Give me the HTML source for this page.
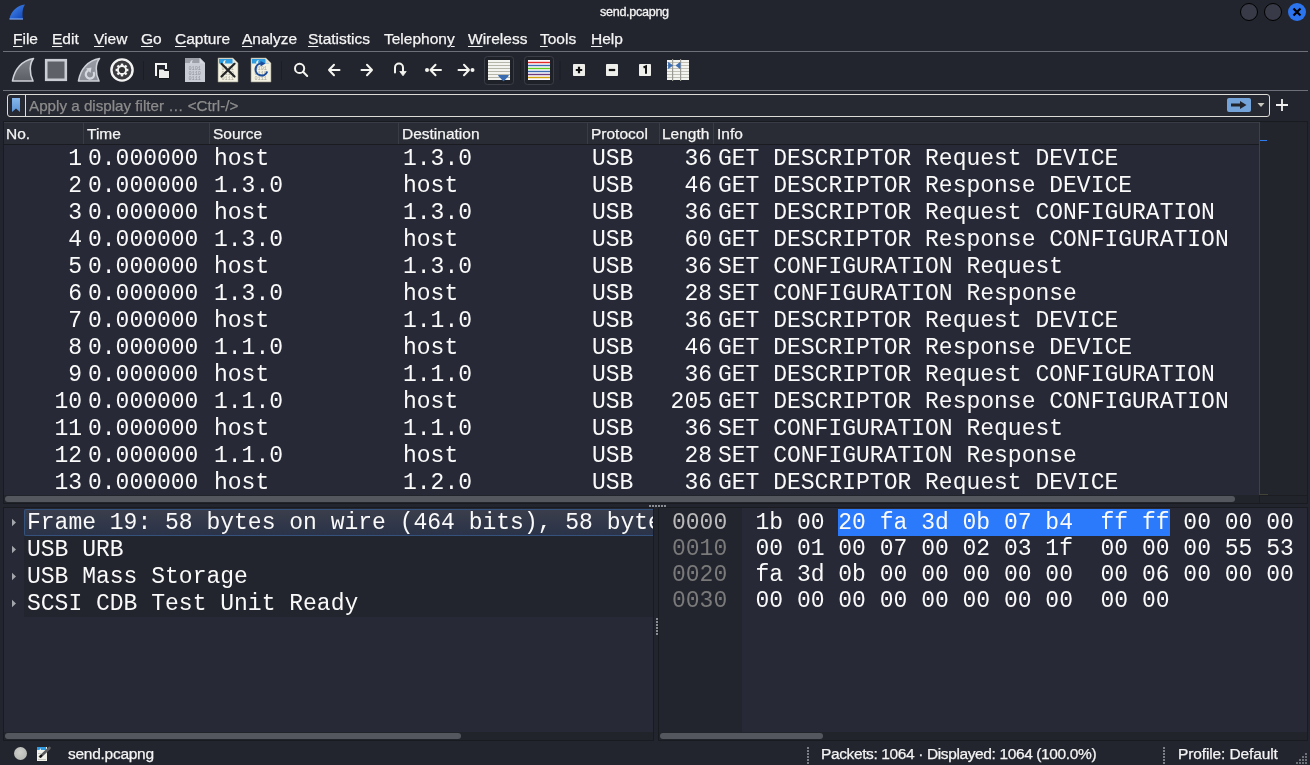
<!DOCTYPE html>
<html><head><meta charset="utf-8">
<style>
*{box-sizing:border-box}
html,body{margin:0;padding:0}
body{width:1310px;height:765px;overflow:hidden;background:#23252e;position:relative;font-family:"Liberation Sans",sans-serif;color:#f4f4f4}
.a{position:absolute;white-space:pre}
.s{font-size:15.5px;line-height:17px;-webkit-text-stroke:0.25px currentColor}
.m{font-family:"Liberation Mono",monospace;font-size:23px;line-height:27px;color:#fafafa}
.u{text-decoration:underline;text-decoration-thickness:1px;text-underline-offset:2px}
.hl{position:absolute;height:1px;background:#6e7079}
#root{position:absolute;left:0;top:0;width:1310px;height:765px;will-change:transform}
</style></head><body><div id="root">
<svg class="a" style="left:8px;top:3px" width="19" height="18" viewBox="0 0 19 18">
<defs><linearGradient id="fin" x1="0" y1="0" x2="1" y2="1"><stop offset="0" stop-color="#4d8ff0"/><stop offset="1" stop-color="#0a3fb5"/></linearGradient></defs>
<path d="M1.5 16 C3 8 9 2.5 17 1.5 C14.5 5 14 11 15 16 Z" fill="url(#fin)"/>
<path d="M1.5 16 L15 16" stroke="#7aa7f0" stroke-width="1.2"/>
</svg>
<div class="a" style="left:600px;top:3.5px;font-size:12.6px;line-height:16px;letter-spacing:-0.3px;-webkit-text-stroke:0.3px #f4f4f4;color:#f4f4f4">send.pcapng</div>
<div class="a" style="left:1240px;top:3px;width:18px;height:18px;border-radius:50%;background:#383b47;border:1px solid #000"></div>
<div class="a" style="left:1264px;top:3px;width:18px;height:18px;border-radius:50%;background:#383b47;border:1px solid #000"></div>
<div class="a" style="left:1288px;top:3px;width:18px;height:18px;border-radius:50%;background:#2b74ee"></div>
<svg class="a" style="left:1288px;top:3px" width="18" height="18"><path d="M5.5 5.5 L12.5 12.5 M12.5 5.5 L5.5 12.5" stroke="#000" stroke-width="2.2"/></svg>
<div class="a s" style="left:13px;top:30px"><span class="u">F</span>ile</div>
<div class="a s" style="left:52px;top:30px"><span class="u">E</span>dit</div>
<div class="a s" style="left:94px;top:30px"><span class="u">V</span>iew</div>
<div class="a s" style="left:141px;top:30px"><span class="u">G</span>o</div>
<div class="a s" style="left:175px;top:30px"><span class="u">C</span>apture</div>
<div class="a s" style="left:242px;top:30px"><span class="u">A</span>nalyze</div>
<div class="a s" style="left:308px;top:30px"><span class="u">S</span>tatistics</div>
<div class="a s" style="left:384px;top:30px">Telephon<span class="u">y</span></div>
<div class="a s" style="left:468px;top:30px"><span class="u">W</span>ireless</div>
<div class="a s" style="left:540px;top:30px"><span class="u">T</span>ools</div>
<div class="a s" style="left:591px;top:30px"><span class="u">H</span>elp</div>
<div class="hl" style="left:3px;top:51px;width:1305px"></div>
<svg class="a" style="left:0;top:0" width="700" height="90" viewBox="0 0 700 90">
<defs>
<linearGradient id="g1" x1="0" y1="0" x2="0" y2="1"><stop offset="0" stop-color="#82848c"/><stop offset="1" stop-color="#5c5e66"/></linearGradient>
<linearGradient id="g2" x1="0" y1="0" x2="0" y2="1"><stop offset="0" stop-color="#989aa4"/><stop offset="1" stop-color="#8a8c96"/></linearGradient>
</defs>
<!-- start fin -->
<path d="M12.5 81 C14.5 69 22 60.5 33.5 58.5 C29.5 63.5 29 73 33 81 Z" fill="url(#g1)" stroke="#cfd1d9" stroke-width="1.6" stroke-linejoin="round"/>
<!-- stop -->
<rect x="46.2" y="60.2" width="19.6" height="19.6" fill="#5f6169" stroke="#cbcdd5" stroke-width="2.6"/>
<!-- restart fin -->
<path d="M78.5 81 C80.5 69 88 60.5 99.5 58.5 C95.5 63.5 95 73 99 81 Z" fill="url(#g2)" stroke="#cfd1d9" stroke-width="1.6" stroke-linejoin="round"/>
<path d="M88.3 70.5 A4.2 4.2 0 1 0 93.5 72" fill="none" stroke="#d6d8e0" stroke-width="2.2"/>
<path d="M86 68.5 L91.5 67.5 L90.5 73 Z" fill="#d6d8e0"/>
<!-- gear -->
<circle cx="122" cy="70" r="10.6" fill="#3a3a3e" stroke="#f4f4f4" stroke-width="2.4"/>
<g fill="#f4f4f4" transform="translate(122 70)">
<circle r="5"/>
<rect x="-1.2" y="-6.4" width="2.4" height="12.8"/>
<rect x="-1.2" y="-6.4" width="2.4" height="12.8" transform="rotate(45)"/>
<rect x="-1.2" y="-6.4" width="2.4" height="12.8" transform="rotate(90)"/>
<rect x="-1.2" y="-6.4" width="2.4" height="12.8" transform="rotate(135)"/>
</g>
<circle cx="122" cy="70" r="3.1" fill="#333336"/>
<!-- sep -->
<rect x="143" y="61" width="1" height="19" fill="#1b1d24"/>
<!-- open -->
<path d="M156 76 V64 H166 V69" fill="none" stroke="#f4f4f4" stroke-width="2"/>
<path d="M158.5 78.5 V69 H163.5 L164.5 70.5 H169.5 V78.5 Z" fill="#ececea" stroke="#15161a" stroke-width="1"/>
<!-- save doc grey -->
<path d="M185 58 H200 L205 63 V82 H185 Z" fill="#c9cbd5"/>
<path d="M185 58 H200 L205 63 H185 Z" fill="#9c9ea8"/>
<path d="M199.5 58 L205 63.5 H199.5 Z" fill="#d8dae2"/>
<path d="M190 63.5 C190 61 191.5 60 193 60 C192 61 192 62 192.3 63.5 Z" fill="#d6d8e0"/>
<g fill="#8f919b" font-family="Liberation Mono" font-size="5.2"><text x="188.5" y="70">0101</text><text x="188.5" y="75">0110</text><text x="188.5" y="80">0111</text></g>
<!-- close doc -->
<path d="M218 58 H233 L238 63 V82 H218 Z" fill="#f3f1e2" stroke="#8c8a7c" stroke-width="0.6"/>
<path d="M219 59 H232.5 L236 63.5 H219 Z" fill="#2f9de0"/>
<path d="M232.5 58.5 L237.5 63.5 H232.5 Z" fill="#e4e2d4"/>
<path d="M223 63.5 C223 61 224.5 60 226 60 C225 61 225 62 225.3 63.5 Z" fill="#f3f1e2"/>
<g fill="#a8a698" font-family="Liberation Mono" font-size="5.2"><text x="221.5" y="70">0101</text><text x="221.5" y="75">0110</text><text x="221.5" y="80">0111</text></g>
<path d="M221.5 63.8 L234.5 76.5 M234.5 63.8 L221.5 76.5" stroke="#222426" stroke-width="2.2" stroke-linecap="round"/>
<!-- reload doc -->
<path d="M251 58 H266 L271 63 V82 H251 Z" fill="#f3f1e2" stroke="#8c8a7c" stroke-width="0.6"/>
<path d="M252 59 H265.5 L269 63.5 H252 Z" fill="#2f9de0"/>
<path d="M265.5 58.5 L270.5 63.5 H265.5 Z" fill="#e4e2d4"/>
<path d="M256 63.5 C256 61 257.5 60 259 60 C258 61 258 62 258.3 63.5 Z" fill="#f3f1e2"/>
<g fill="#a8a698" font-family="Liberation Mono" font-size="5.2"><text x="254.5" y="70">0101</text><text x="254.5" y="75">0110</text><text x="254.5" y="80">0111</text></g>
<path d="M261.5 63.5 A6 6 0 1 0 267.2 71.5" fill="none" stroke="#1c4d9c" stroke-width="2.1"/>
<path d="M260.5 61 L265.5 63.5 L260.5 66.5 Z" fill="#1c4d9c"/>
<!-- sep -->
<rect x="281" y="61" width="1" height="19" fill="#1b1d24"/>
<!-- search -->
<circle cx="299.6" cy="68.4" r="4.6" fill="none" stroke="#f4f4f0" stroke-width="2"/>
<path d="M303 71.8 L307.2 76" stroke="#f4f4f0" stroke-width="2" stroke-linecap="round"/>
<!-- arrows -->
<g stroke="#f4f4f0" stroke-width="2" fill="none" stroke-linecap="round" stroke-linejoin="round">
<path d="M329 70 H339.5 M334 64.8 L329 70 L334 75.2"/>
<path d="M361.5 70 H372 M367 64.8 L372 70 L367 75.2"/>
<path d="M395 72.5 V67.5 A4 4 0 0 1 403 67.5 V72"/>
<path d="M430.5 70 H441 M435.5 64.8 L430.5 70 L435.5 75.2"/>
<path d="M458.5 70 H469 M464 64.8 L469 70 L464 75.2"/>
</g>
<path d="M399.8 71.5 H406.2 L403 75.8 Z" fill="#f4f4f0" stroke="#f4f4f0" stroke-width="0.8" stroke-linejoin="round"/>
<circle cx="427" cy="70" r="2" fill="#f4f4f0"/>
<circle cx="472.5" cy="70" r="2" fill="#f4f4f0"/>
<!-- autoscroll -->
<rect x="484.5" y="56.5" width="29" height="28" rx="3" fill="#1f2128" stroke="#3b3e47" stroke-width="1"/>
<rect x="488" y="60" width="22" height="20" fill="#f3f3ef"/>
<g fill="#b5b5aa"><rect x="488" y="62" width="22" height="1"/><rect x="488" y="65" width="22" height="1"/><rect x="488" y="68" width="22" height="1"/><rect x="488" y="71" width="22" height="1"/><rect x="488" y="74" width="22" height="1"/><rect x="488" y="77" width="22" height="1"/></g>
<path d="M498.8 75.5 H508.2 L503.5 80.5 Z" fill="#3a6cb2" stroke="#3a6cb2" stroke-width="1.2" stroke-linejoin="round"/>
<rect x="520" y="61" width="1" height="19" fill="#1b1d24"/>
<!-- colorize -->
<rect x="524.5" y="56.5" width="29" height="28" rx="3" fill="#1f2128" stroke="#3b3e47" stroke-width="1"/>
<rect x="528" y="60" width="22" height="20" fill="#fbf8fb"/>
<rect x="528" y="61.8" width="22" height="1.4" fill="#e52a2a"/>
<rect x="528" y="64.8" width="22" height="1.4" fill="#3b6db3"/>
<rect x="528" y="67.8" width="22" height="1.4" fill="#5fcb1e"/>
<rect x="528" y="70.8" width="22" height="1.4" fill="#3b6db3"/>
<rect x="528" y="73.8" width="22" height="1.4" fill="#6e3b7c"/>
<rect x="528" y="76.8" width="22" height="1.4" fill="#d0a10a"/>
<rect x="559.5" y="61" width="1" height="19" fill="#1b1d24"/>
<!-- zoom -->
<rect x="573" y="64" width="12" height="12" rx="0.8" fill="#eeeeea"/>
<path d="M579 66.8 V73.2 M575.8 70 H582.2" stroke="#111" stroke-width="2.2"/>
<rect x="606" y="64" width="12" height="12" rx="0.8" fill="#eeeeea"/>
<path d="M608.8 70 H615.2" stroke="#111" stroke-width="2.2"/>
<rect x="639" y="64" width="12" height="12" rx="0.8" fill="#eeeeea"/>
<path d="M643.5 67.5 L646 66.3 V73.8" stroke="#111" stroke-width="2" fill="none"/>
<!-- resize cols -->
<rect x="667" y="60" width="22" height="20" fill="#f3f3ef"/>
<g fill="#c0c0b6"><rect x="667" y="62" width="22" height="1"/><rect x="667" y="65" width="22" height="1"/><rect x="667" y="68" width="22" height="1"/><rect x="667" y="71" width="22" height="1"/><rect x="667" y="74" width="22" height="1"/><rect x="667" y="77" width="22" height="1"/></g>
<rect x="672" y="59" width="1.2" height="22" fill="#9a9a94"/>
<rect x="680" y="59" width="1.2" height="22" fill="#9a9a94"/>
<path d="M668.5 62.5 L672.5 65.5 L668.5 68.5 Z" fill="#3a6cb2" stroke="#3a6cb2" stroke-width="0.8" stroke-linejoin="round"/>
<path d="M680 62.5 L676 65.5 L680 68.5 Z" fill="#3a6cb2" stroke="#3a6cb2" stroke-width="0.8" stroke-linejoin="round"/>
</svg>
<div class="hl" style="left:3px;top:90px;width:1305px"></div>
<div class="a" style="left:7px;top:94px;width:1263px;height:23px;border:1.5px solid #dedcd6;border-radius:3px;background:#262832"></div>
<div class="a" style="left:25px;top:95px;width:1px;height:21px;background:#dedcd6"></div>
<svg class="a" style="left:11px;top:97px" width="10" height="16"><defs><linearGradient id="bm" x1="0" y1="0" x2="0" y2="1"><stop offset="0" stop-color="#86b8ec"/><stop offset="1" stop-color="#5b93d6"/></linearGradient></defs><path d="M1 1 H9 V15 L5 11.5 L1 15 Z" fill="url(#bm)"/></svg>
<div class="a s" style="left:29px;top:97px;color:#8c8c8c;font-size:15.2px">Apply a display filter … &lt;Ctrl-/&gt;</div>
<div class="a" style="left:1227px;top:98px;width:24px;height:14px;border-radius:2px;background:#73a3d8"></div>
<svg class="a" style="left:1227px;top:98px" width="24" height="14"><path d="M4 5.5 H13 V3 L19.5 7 L13 11 V8.5 H4 Z" fill="#23252d"/></svg>
<svg class="a" style="left:1256px;top:101px" width="10" height="8"><path d="M1.5 2 H8.5 L5 6 Z" fill="#c8c8c0"/></svg>
<svg class="a" style="left:1274px;top:97px" width="16" height="16"><path d="M8 2 V14 M2 8 H14" stroke="#f0f0f0" stroke-width="1.8"/></svg>
<div class="a" style="left:3px;top:121px;width:1305px;height:383px;background:#272a36;border:1px solid #1a1b21"></div>
<div class="a" style="left:4px;top:122px;width:1255px;height:23px;background:#2a2c35;border-top:1px solid #3a3c45;border-bottom:1px solid #1a1b21"></div>
<div class="a" style="left:83px;top:123px;width:1px;height:21px;background:#3a3c45"></div>
<div class="a" style="left:209px;top:123px;width:1px;height:21px;background:#3a3c45"></div>
<div class="a" style="left:398px;top:123px;width:1px;height:21px;background:#3a3c45"></div>
<div class="a" style="left:587px;top:123px;width:1px;height:21px;background:#3a3c45"></div>
<div class="a" style="left:659px;top:123px;width:1px;height:21px;background:#3a3c45"></div>
<div class="a" style="left:713px;top:123px;width:1px;height:21px;background:#3a3c45"></div>
<div class="a" style="left:1259px;top:122px;width:48px;height:373px;background:#23252d"></div>
<div class="a" style="left:1259px;top:122px;width:1px;height:373px;background:#434238"></div>
<div class="a" style="left:1259px;top:494px;width:9px;height:1px;background:#434238"></div>
<div class="a" style="left:1260px;top:140px;width:7px;height:1px;background:#2f7cf0"></div>
<div class="a" style="left:4px;top:495px;width:1303px;height:8px;background:#22242b"></div>
<div class="a" style="left:1259px;top:495px;width:1px;height:8px;background:#1c1d23"></div>
<div class="a" style="left:1260px;top:495px;width:47px;height:1px;background:#1c1d23"></div>
<div class="a s" style="left:6px;top:125px">No.</div>
<div class="a s" style="left:87px;top:125px">Time</div>
<div class="a s" style="left:213px;top:125px">Source</div>
<div class="a s" style="left:402px;top:125px">Destination</div>
<div class="a s" style="left:591px;top:125px">Protocol</div>
<div class="a s" style="left:662px;top:125px">Length</div>
<div class="a s" style="left:717px;top:125px">Info</div>
<div class="a m" style="left:0;top:146px;width:82px;text-align:right">1</div>
<div class="a m" style="left:88px;top:146px">0.000000</div>
<div class="a m" style="left:214px;top:146px">host</div>
<div class="a m" style="left:403px;top:146px">1.3.0</div>
<div class="a m" style="left:592px;top:146px">USB</div>
<div class="a m" style="left:600px;top:146px;width:112px;text-align:right">36</div>
<div class="a m" style="left:718px;top:146px">GET DESCRIPTOR Request DEVICE</div>
<div class="a m" style="left:0;top:173px;width:82px;text-align:right">2</div>
<div class="a m" style="left:88px;top:173px">0.000000</div>
<div class="a m" style="left:214px;top:173px">1.3.0</div>
<div class="a m" style="left:403px;top:173px">host</div>
<div class="a m" style="left:592px;top:173px">USB</div>
<div class="a m" style="left:600px;top:173px;width:112px;text-align:right">46</div>
<div class="a m" style="left:718px;top:173px">GET DESCRIPTOR Response DEVICE</div>
<div class="a m" style="left:0;top:200px;width:82px;text-align:right">3</div>
<div class="a m" style="left:88px;top:200px">0.000000</div>
<div class="a m" style="left:214px;top:200px">host</div>
<div class="a m" style="left:403px;top:200px">1.3.0</div>
<div class="a m" style="left:592px;top:200px">USB</div>
<div class="a m" style="left:600px;top:200px;width:112px;text-align:right">36</div>
<div class="a m" style="left:718px;top:200px">GET DESCRIPTOR Request CONFIGURATION</div>
<div class="a m" style="left:0;top:227px;width:82px;text-align:right">4</div>
<div class="a m" style="left:88px;top:227px">0.000000</div>
<div class="a m" style="left:214px;top:227px">1.3.0</div>
<div class="a m" style="left:403px;top:227px">host</div>
<div class="a m" style="left:592px;top:227px">USB</div>
<div class="a m" style="left:600px;top:227px;width:112px;text-align:right">60</div>
<div class="a m" style="left:718px;top:227px">GET DESCRIPTOR Response CONFIGURATION</div>
<div class="a m" style="left:0;top:254px;width:82px;text-align:right">5</div>
<div class="a m" style="left:88px;top:254px">0.000000</div>
<div class="a m" style="left:214px;top:254px">host</div>
<div class="a m" style="left:403px;top:254px">1.3.0</div>
<div class="a m" style="left:592px;top:254px">USB</div>
<div class="a m" style="left:600px;top:254px;width:112px;text-align:right">36</div>
<div class="a m" style="left:718px;top:254px">SET CONFIGURATION Request</div>
<div class="a m" style="left:0;top:281px;width:82px;text-align:right">6</div>
<div class="a m" style="left:88px;top:281px">0.000000</div>
<div class="a m" style="left:214px;top:281px">1.3.0</div>
<div class="a m" style="left:403px;top:281px">host</div>
<div class="a m" style="left:592px;top:281px">USB</div>
<div class="a m" style="left:600px;top:281px;width:112px;text-align:right">28</div>
<div class="a m" style="left:718px;top:281px">SET CONFIGURATION Response</div>
<div class="a m" style="left:0;top:308px;width:82px;text-align:right">7</div>
<div class="a m" style="left:88px;top:308px">0.000000</div>
<div class="a m" style="left:214px;top:308px">host</div>
<div class="a m" style="left:403px;top:308px">1.1.0</div>
<div class="a m" style="left:592px;top:308px">USB</div>
<div class="a m" style="left:600px;top:308px;width:112px;text-align:right">36</div>
<div class="a m" style="left:718px;top:308px">GET DESCRIPTOR Request DEVICE</div>
<div class="a m" style="left:0;top:335px;width:82px;text-align:right">8</div>
<div class="a m" style="left:88px;top:335px">0.000000</div>
<div class="a m" style="left:214px;top:335px">1.1.0</div>
<div class="a m" style="left:403px;top:335px">host</div>
<div class="a m" style="left:592px;top:335px">USB</div>
<div class="a m" style="left:600px;top:335px;width:112px;text-align:right">46</div>
<div class="a m" style="left:718px;top:335px">GET DESCRIPTOR Response DEVICE</div>
<div class="a m" style="left:0;top:362px;width:82px;text-align:right">9</div>
<div class="a m" style="left:88px;top:362px">0.000000</div>
<div class="a m" style="left:214px;top:362px">host</div>
<div class="a m" style="left:403px;top:362px">1.1.0</div>
<div class="a m" style="left:592px;top:362px">USB</div>
<div class="a m" style="left:600px;top:362px;width:112px;text-align:right">36</div>
<div class="a m" style="left:718px;top:362px">GET DESCRIPTOR Request CONFIGURATION</div>
<div class="a m" style="left:0;top:389px;width:82px;text-align:right">10</div>
<div class="a m" style="left:88px;top:389px">0.000000</div>
<div class="a m" style="left:214px;top:389px">1.1.0</div>
<div class="a m" style="left:403px;top:389px">host</div>
<div class="a m" style="left:592px;top:389px">USB</div>
<div class="a m" style="left:600px;top:389px;width:112px;text-align:right">205</div>
<div class="a m" style="left:718px;top:389px">GET DESCRIPTOR Response CONFIGURATION</div>
<div class="a m" style="left:0;top:416px;width:82px;text-align:right">11</div>
<div class="a m" style="left:88px;top:416px">0.000000</div>
<div class="a m" style="left:214px;top:416px">host</div>
<div class="a m" style="left:403px;top:416px">1.1.0</div>
<div class="a m" style="left:592px;top:416px">USB</div>
<div class="a m" style="left:600px;top:416px;width:112px;text-align:right">36</div>
<div class="a m" style="left:718px;top:416px">SET CONFIGURATION Request</div>
<div class="a m" style="left:0;top:443px;width:82px;text-align:right">12</div>
<div class="a m" style="left:88px;top:443px">0.000000</div>
<div class="a m" style="left:214px;top:443px">1.1.0</div>
<div class="a m" style="left:403px;top:443px">host</div>
<div class="a m" style="left:592px;top:443px">USB</div>
<div class="a m" style="left:600px;top:443px;width:112px;text-align:right">28</div>
<div class="a m" style="left:718px;top:443px">SET CONFIGURATION Response</div>
<div class="a m" style="left:0;top:470px;width:82px;text-align:right">13</div>
<div class="a m" style="left:88px;top:470px">0.000000</div>
<div class="a m" style="left:214px;top:470px">host</div>
<div class="a m" style="left:403px;top:470px">1.2.0</div>
<div class="a m" style="left:592px;top:470px">USB</div>
<div class="a m" style="left:600px;top:470px;width:112px;text-align:right">36</div>
<div class="a m" style="left:718px;top:470px">GET DESCRIPTOR Request DEVICE</div>
<div class="a" style="left:5px;top:496px;width:1230px;height:6px;border-radius:3px;background:#55575f"></div>
<div class="a" style="left:3px;top:507px;width:651px;height:234px;background:#272a36;border:1px solid #1a1b21"></div>
<div class="a" style="left:24px;top:508px;width:629px;height:109px;background:#23252e"></div>
<div class="a" style="left:4px;top:732px;width:649px;height:8px;background:#22242b"></div>
<div class="a" style="left:24px;top:509px;width:629px;height:27px;border-radius:2px 0 0 2px;background:linear-gradient(#3b3e4b,#2a3349);border:1px solid #34527c;border-right:none"></div>
<svg class="a" style="left:11px;top:517px" width="8" height="11"><path d="M1 1.75 L5 5.5 L1 9.25 Z" fill="#a4a6ac"/></svg>
<div class="a m" style="left:27px;top:510px;width:626px;overflow:hidden">Frame 19: 58 bytes on wire (464 bits), 58 bytes captured (464 bits)</div>
<svg class="a" style="left:11px;top:544px" width="8" height="11"><path d="M1 1.75 L5 5.5 L1 9.25 Z" fill="#a4a6ac"/></svg>
<div class="a m" style="left:27px;top:537px;width:626px;overflow:hidden">USB URB</div>
<svg class="a" style="left:11px;top:571px" width="8" height="11"><path d="M1 1.75 L5 5.5 L1 9.25 Z" fill="#a4a6ac"/></svg>
<div class="a m" style="left:27px;top:564px;width:626px;overflow:hidden">USB Mass Storage</div>
<svg class="a" style="left:11px;top:598px" width="8" height="11"><path d="M1 1.75 L5 5.5 L1 9.25 Z" fill="#a4a6ac"/></svg>
<div class="a m" style="left:27px;top:591px;width:626px;overflow:hidden">SCSI CDB Test Unit Ready</div>
<div class="a" style="left:5px;top:733px;width:456px;height:6px;border-radius:3px;background:#55575f"></div>
<div class="a" style="left:658px;top:507px;width:650px;height:234px;background:#272a36;border:1px solid #1a1b21"></div>
<div class="a" style="left:659px;top:508px;width:83px;height:224px;background:#23252e"></div>
<div class="a" style="left:659px;top:732px;width:648px;height:8px;background:#22242b"></div>
<div class="a" style="left:838px;top:509px;width:332px;height:27px;background:#2b7afc"></div>
<div class="a m" style="left:672px;top:510px;line-height:26px;color:#bababa">0000</div>
<div class="a m" style="left:755.5px;top:510px;line-height:26px">1b 00 20 fa 3d 0b 07 b4  ff ff 00 00 00</div>
<div class="a m" style="left:672px;top:536px;line-height:26px;color:#7a7a7a">0010</div>
<div class="a m" style="left:755.5px;top:536px;line-height:26px">00 01 00 07 00 02 03 1f  00 00 00 55 53</div>
<div class="a m" style="left:672px;top:562px;line-height:26px;color:#7a7a7a">0020</div>
<div class="a m" style="left:755.5px;top:562px;line-height:26px">fa 3d 0b 00 00 00 00 00  00 06 00 00 00</div>
<div class="a m" style="left:672px;top:588px;line-height:26px;color:#7a7a7a">0030</div>
<div class="a m" style="left:755.5px;top:588px;line-height:26px">00 00 00 00 00 00 00 00  00 00</div>
<div class="a" style="left:660px;top:733px;width:163px;height:6px;border-radius:3px;background:#55575f"></div>
<div class="a" style="left:649px;top:505px;width:18px;height:2px;background:repeating-linear-gradient(90deg,#8a8c94 0 2px,transparent 2px 3px)"></div>
<div class="a" style="left:656px;top:618px;width:2px;height:18px;background:repeating-linear-gradient(180deg,#8a8c94 0 2px,transparent 2px 3px)"></div>
<div class="a" style="left:13.5px;top:746.5px;width:13px;height:13px;border-radius:50%;background:radial-gradient(circle at 45% 40%,#cfd0cc,#b0b2ae)"></div>
<svg class="a" style="left:36px;top:744.5px" width="16" height="18"><path d="M1 2 H11 V16 H1 Z" fill="#f2f1ea"/><path d="M1 2 H10 V5 H1 Z" fill="#2f9ae0"/><path d="M3.5 5 L4.5 3 L5 5 Z" fill="#f2f1ea"/><g fill="#c8c8c0"><rect x="2" y="8" width="3" height="1"/><rect x="2" y="11" width="4" height="1"/><rect x="2" y="14" width="8" height="1"/></g><path d="M4.5 11.5 L13.5 3" stroke="#5a5c5e" stroke-width="2.6" stroke-linecap="round"/><path d="M4.4 11.6 L5.3 10.8" stroke="#111" stroke-width="2.2" stroke-linecap="round"/></svg>
<div class="a s" style="left:68px;top:745px;letter-spacing:-0.27px">send.pcapng</div>
<div class="a" style="left:807px;top:747px;width:2px;height:17px;background:repeating-linear-gradient(180deg,#7c7e86 0 2px,transparent 2px 3px)"></div>
<div class="a s" style="left:821px;top:745px;letter-spacing:-0.38px">Packets: 1064 · Displayed: 1064 (100.0%)</div>
<div class="a" style="left:1163px;top:747px;width:2px;height:17px;background:repeating-linear-gradient(180deg,#7c7e86 0 2px,transparent 2px 3px)"></div>
<div class="a s" style="left:1178px;top:745px;letter-spacing:-0.12px">Profile: Default</div>
<svg class="a" style="left:1290px;top:750px" width="20" height="15"><g fill="#6e7078"><rect x="15" y="3" width="2" height="2"/><rect x="15" y="6" width="2" height="2"/><rect x="12" y="6" width="2" height="2"/><rect x="15" y="9" width="2" height="2"/><rect x="12" y="9" width="2" height="2"/><rect x="9" y="9" width="2" height="2"/><rect x="15" y="12" width="2" height="2"/><rect x="12" y="12" width="2" height="2"/><rect x="9" y="12" width="2" height="2"/><rect x="6" y="12" width="2" height="2"/></g></svg>
</div></body></html>
